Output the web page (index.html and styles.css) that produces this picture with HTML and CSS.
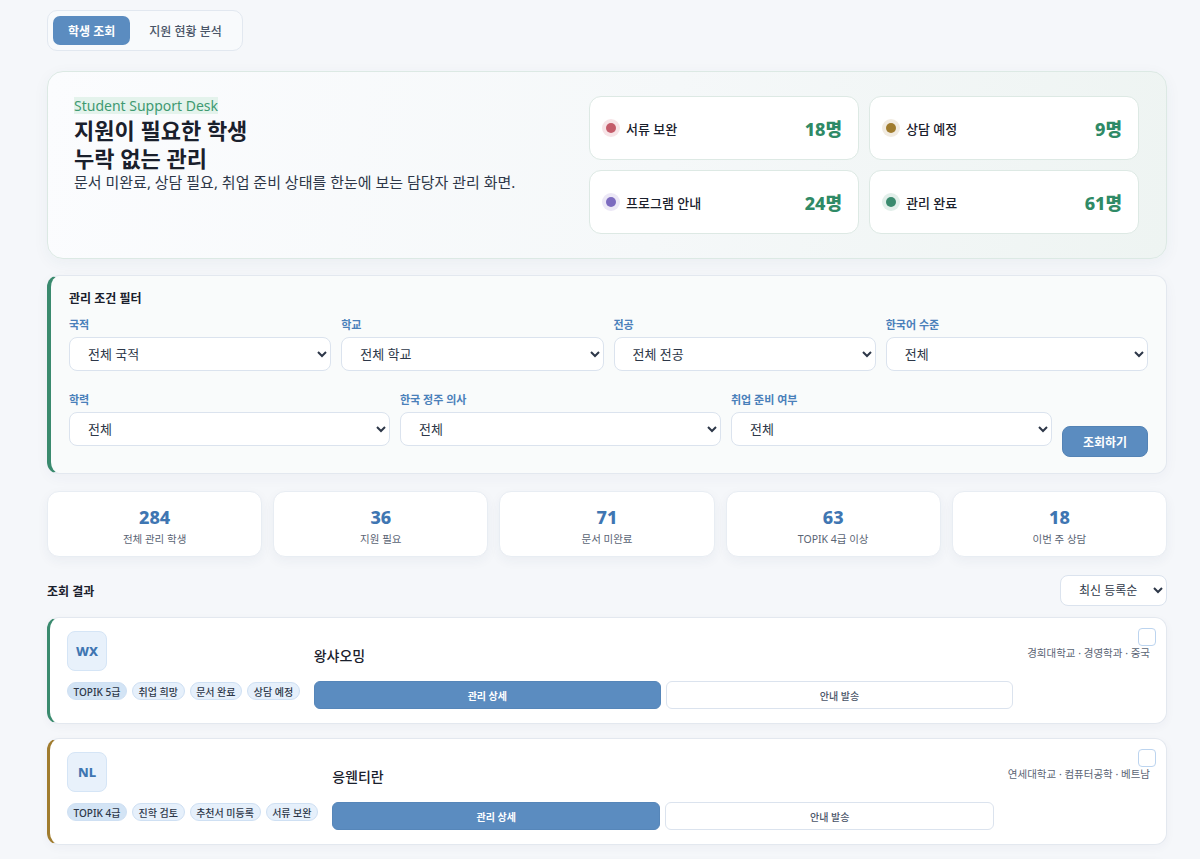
FILE: index.html
```html
<!DOCTYPE html>
<html lang="ko">
<head>
<meta charset="utf-8">
<title>Student Support Desk</title>
<link rel="stylesheet" href="styles.css">
</head>
<body>
<div class="page">
  <nav class="tabs">
    <button class="tab active">학생 조회</button>
    <button class="tab">지원 현황 분석</button>
  </nav>

  <section class="hero">
    <div class="hero-text">
      <span class="eyebrow">Student Support Desk</span>
      <h1>지원이 필요한 학생<br>누락 없는 관리</h1>
      <p>문서 미완료, 상담 필요, 취업 준비 상태를 한눈에 보는 담당자 관리 화면.</p>
    </div>
    <div class="hero-stats">
      <div class="hstat"><span class="dot red"></span><span class="hlabel">서류 보완</span><span class="hval">18명</span></div>
      <div class="hstat"><span class="dot brown"></span><span class="hlabel">상담 예정</span><span class="hval">9명</span></div>
      <div class="hstat"><span class="dot purple"></span><span class="hlabel">프로그램 안내</span><span class="hval">24명</span></div>
      <div class="hstat"><span class="dot green"></span><span class="hlabel">관리 완료</span><span class="hval">61명</span></div>
    </div>
  </section>

  <section class="filter">
    <h2>관리 조건 필터</h2>
    <div class="frow four">
      <label class="field"><span>국적</span><select><option>전체 국적</option></select></label>
      <label class="field"><span>학교</span><select><option>전체 학교</option></select></label>
      <label class="field"><span>전공</span><select><option>전체 전공</option></select></label>
      <label class="field"><span>한국어 수준</span><select><option>전체</option></select></label>
    </div>
    <div class="frow three">
      <label class="field"><span>학력</span><select><option>전체</option></select></label>
      <label class="field"><span>한국 정주 의사</span><select><option>전체</option></select></label>
      <label class="field"><span>취업 준비 여부</span><select><option>전체</option></select></label>
      <button class="search">조회하기</button>
    </div>
  </section>

  <section class="stats">
    <div class="stat"><strong>284</strong><span>전체 관리 학생</span></div>
    <div class="stat"><strong>36</strong><span>지원 필요</span></div>
    <div class="stat"><strong>71</strong><span>문서 미완료</span></div>
    <div class="stat"><strong>63</strong><span>TOPIK 4급 이상</span></div>
    <div class="stat"><strong>18</strong><span>이번 주 상담</span></div>
  </section>

  <div class="results-head">
    <h3>조회 결과</h3>
    <select class="sort"><option>최신 등록순</option></select>
  </div>

  <div class="list">
    <article class="card c-green">
      <input type="checkbox" class="pick">
      <div class="avatar">WX</div>
      <div class="name">왕샤오밍</div>
      <div class="meta">경희대학교 · 경영학과 · 중국</div>
      <div class="tags"><span class="tag strong">TOPIK 5급</span><span class="tag">취업 희망</span><span class="tag">문서 완료</span><span class="tag">상담 예정</span></div>
      <div class="actions"><button class="primary">관리 상세</button><button class="ghost">안내 발송</button></div>
    </article>
    <article class="card c-brown">
      <input type="checkbox" class="pick">
      <div class="avatar">NL</div>
      <div class="name">응웬티란</div>
      <div class="meta">연세대학교 · 컴퓨터공학 · 베트남</div>
      <div class="tags"><span class="tag strong">TOPIK 4급</span><span class="tag">진학 검토</span><span class="tag">추천서 미등록</span><span class="tag">서류 보완</span></div>
      <div class="actions"><button class="primary">관리 상세</button><button class="ghost">안내 발송</button></div>
    </article>
    <article class="card c-purple">
      <input type="checkbox" class="pick">
      <div class="avatar">AK</div>
      <div class="name">아지즈 카리모프</div>
      <div class="meta">고려대학교 · 국제학 · 우즈베키스탄</div>
      <div class="tags"><span class="tag strong">TOPIK 3급</span><span class="tag">정주 희망</span><span class="tag">프로그램 안내</span></div>
      <div class="actions"><button class="primary">관리 상세</button><button class="ghost">안내 발송</button></div>
    </article>
  </div>
</div>
</body>
</html>
```

FILE: styles.css
```css
* { box-sizing: border-box; }
html, body { margin: 0; padding: 0; }
body {
  background: #f5f7fa;
  font-family: "Noto Sans", "Noto Sans CJK KR", sans-serif;
  color: #1f2733;
  overflow: hidden;
}
.page {
  width: 1120px;
  margin-left: 47px;
  padding-top: 10px;
}

/* tabs */
.tabs {
  display: inline-flex;
  gap: 4px;
  padding: 5px;
  background: #f8fafc;
  border: 1px solid #e2e8f0;
  border-radius: 10px;
}
.tab {
  border: 0;
  background: transparent;
  font-family: inherit;
  font-size: 12px;
  font-weight: 500;
  color: #4a5568;
  height: 29px;
  padding: 0 15px;
  border-radius: 7px;
}
.tab.active {
  background: #5b8cc0;
  color: #fff;
  font-weight: 700;
}

/* hero */
.hero {
  margin-top: 20px;
  display: flex;
  justify-content: space-between;
  padding: 24px 27px 24px 26px;
  background: linear-gradient(100deg, #fbfcfe 0%, #f5f8f9 55%, #eef4f2 100%);
  border: 1px solid #dce9e4;
  border-radius: 16px;
  box-shadow: 0 4px 16px rgba(40, 70, 90, 0.05);
}
.hero-text { margin-top: -2px; }
.eyebrow {
  display: inline-block;
  font-size: 14px;
  line-height: 17px;
  color: #3f9a72;
  background: #e4f3ec;
}
.hero h1 {
  margin: 0;
  font-size: 22px;
  line-height: 28px;
  font-weight: 700;
  color: #1a202c;
}
.hero p {
  margin: 0;
  font-size: 15px;
  line-height: 20px;
  color: #2d3748;
}
.hero-stats {
  display: grid;
  grid-template-columns: 270px 270px;
  gap: 10px 10px;
}
.hstat {
  height: 64px;
  display: flex;
  align-items: center;
  padding: 0 16px;
  background: #fff;
  border: 1px solid #dde9e4;
  border-radius: 12px;
}
.dot {
  width: 10px;
  height: 10px;
  border-radius: 50%;
  margin-left: 0;
  margin-right: 10px;
}
.dot.red { background: #c45c6a; box-shadow: 0 0 0 4px #f7e4e7; }
.dot.brown { background: #a07c2e; box-shadow: 0 0 0 4px #f1ebe1; }
.dot.purple { background: #7c6bbf; box-shadow: 0 0 0 4px #ece8f6; }
.dot.green { background: #3a8a6e; box-shadow: 0 0 0 4px #e2efea; }
.hlabel {
  font-size: 13px;
  font-weight: 500;
  color: #1a202c;
}
.hval {
  margin-left: auto;
  font-size: 18px;
  font-weight: 800;
  color: #2f8a66;
}

/* filter */
.filter {
  margin-top: 16px;
  padding: 14px 18px 16px 18px;
  background: #f9fbfb;
  border: 1px solid #e3e8ef;
  border-left: 4px solid #3a8a6e;
  border-radius: 12px;
  box-shadow: 0 4px 14px rgba(40, 60, 90, 0.04);
}
.filter h2 {
  margin: 0 0 9px;
  font-size: 12px;
  line-height: 18px;
  font-weight: 700;
  color: #1a202c;
}
.frow {
  display: grid;
  gap: 10px;
}
.frow.four { grid-template-columns: repeat(4, 1fr); }
.frow.three {
  margin-top: 21px;
  grid-template-columns: 1fr 1fr 1fr 86px;
  align-items: end;
}
.frow.three .field { padding-bottom: 11px; }
.field {
  display: flex;
  flex-direction: column;
}
.field span {
  font-size: 11px;
  line-height: 16px;
  font-weight: 600;
  color: #4a80ba;
  margin-bottom: 4px;
}
select {
  height: 34px;
  padding: 0 10px 0 14px;
  font-family: inherit;
  font-size: 13px;
  color: #2d3748;
  background: #fff;
  border: 1px solid #dbe3ee;
  border-radius: 8px;
}
.search {
  height: 31px;
  border: 1px solid #5483b5;
  border-radius: 8px;
  background: #5b8cc0;
  color: #fff;
  font-family: inherit;
  font-size: 12px;
  font-weight: 700;
}

/* stats */
.stats {
  margin-top: 17px;
  display: grid;
  grid-template-columns: repeat(5, 1fr);
  gap: 11px;
}
.stat {
  height: 66px;
  display: flex;
  flex-direction: column;
  align-items: center;
  justify-content: center;
  gap: 4px;
  padding-top: 4px;
  background: #fff;
  border: 1px solid #e8edf3;
  border-radius: 12px;
  box-shadow: 0 4px 12px rgba(40, 60, 90, 0.05);
}
.stat strong {
  font-size: 18px;
  line-height: 22px;
  font-weight: 800;
  color: #3f76b2;
}
.stat span {
  font-size: 10.5px;
  line-height: 15px;
  color: #5a6474;
}

/* results */
.results-head {
  margin-top: 18px;
  display: flex;
  align-items: center;
  justify-content: space-between;
}
.results-head h3 {
  margin: 0;
  font-size: 12px;
  font-weight: 700;
  color: #1a202c;
}
.sort {
  width: 107px;
  height: 31px;
  font-size: 12px;
  padding-left: 14px;
}
.list {
  margin-top: 11px;
  display: flex;
  flex-direction: column;
  gap: 14px;
}
.card {
  position: relative;
  display: grid;
  grid-template-columns: auto 1fr auto;
  grid-template-rows: 40px auto;
  grid-template-areas: "av name meta" "tags act .";
  column-gap: 14px;
  row-gap: 10px;
  padding: 13px 16px 14px 17px;
  background: #fff;
  border: 1px solid #e3e8ef;
  border-left: 3px solid #3a8a6e;
  border-radius: 12px;
  box-shadow: 0 3px 10px rgba(40, 60, 90, 0.04);
}
.card.c-brown { border-left-color: #a07c2e; }
.card.c-purple { border-left-color: #7c6bbf; }
.pick {
  position: absolute;
  top: 10px;
  right: 10px;
  margin: 0;
  appearance: none;
  width: 18px;
  height: 18px;
  border: 1.5px solid #bcd4ef;
  border-radius: 4px;
  background: #fff;
}
.avatar {
  grid-area: av;
  width: 40px;
  height: 40px;
  display: flex;
  align-items: center;
  justify-content: center;
  background: #e8f1fb;
  border: 1px solid #d5e5f6;
  border-radius: 8px;
  font-size: 13px;
  font-weight: 800;
  color: #3f76b2;
}
.name {
  grid-area: name;
  align-self: end;
  margin-bottom: 5px;
  font-size: 14px;
  line-height: 20px;
  font-weight: 500;
  color: #1a202c;
}
.meta {
  grid-area: meta;
  align-self: center;
  padding-top: 2px;
  font-size: 10.5px;
  color: #5a6474;
  text-align: right;
}
.tags {
  grid-area: tags;
  display: flex;
  gap: 5px;
  align-self: start;
  margin-top: 1px;
}
.tag {
  height: 18px;
  padding: 0 5.6px;
  display: inline-flex;
  align-items: center;
  font-size: 10px;
  font-weight: 500;
  color: #2d3748;
  background: #e6f0fb;
  border: 1px solid #cfe0f3;
  border-radius: 9px;
  white-space: nowrap;
}
.tag.strong { background: #d3e4f5; }
.actions {
  grid-area: act;
  display: grid;
  grid-template-columns: 1fr 1fr;
  gap: 5px;
}
.actions button {
  height: 28px;
  border-radius: 6px;
  font-family: inherit;
  font-size: 10px;
  font-weight: 700;
}
.primary {
  background: #5b8cc0;
  color: #fff;
  border: 1px solid #5686b9;
}
.ghost {
  background: #fff;
  color: #4a5568;
  border: 1px solid #dbe3ee;
  font-weight: 500 !important;
}
```
